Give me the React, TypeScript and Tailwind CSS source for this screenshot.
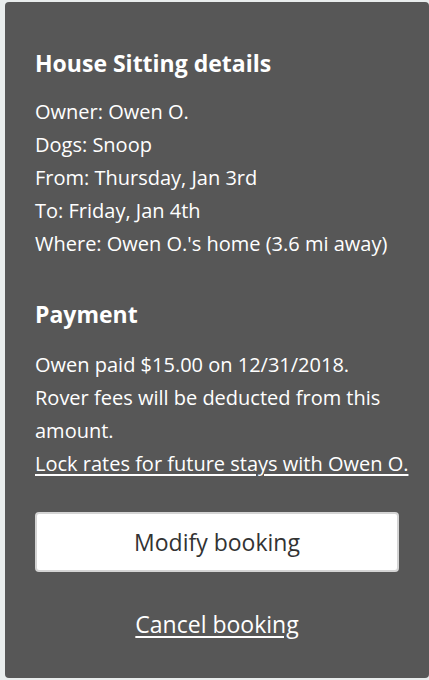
import React from 'react';

const details = [
  'Owner: Owen O.',
  'Dogs: Snoop',
  'From: Thursday, Jan 3rd',
  'To: Friday, Jan 4th',
  "Where: Owen O.'s home (3.6 mi away)",
];

export default function App() {
  return (
    <div
      className="min-h-[680px] w-[429px] bg-[#e9eded] pt-[2px] pl-[5px]"
      style={{ fontFamily: '"Open Sans", Lato, sans-serif' }}
    >
      <div className="h-[676px] rounded-[4px] bg-[#575757] px-[30px] pt-[47px] text-white">
        <h2 className="text-[23px] font-bold leading-[28px]">House Sitting details</h2>
        <div className="mt-[18px] text-[20px] leading-[33px]">
          {details.map((d) => (
            <p key={d}>{d}</p>
          ))}
        </div>

        <h2 className="mt-[40px] text-[23px] font-bold leading-[28px]">Payment</h2>
        <div className="mt-[20px] text-[20px] leading-[33px]">
          <p>Owen paid $15.00 on 12/31/2018.</p>
          <p>Rover fees will be deducted from this amount.</p>
          <a href="#" className="whitespace-nowrap underline underline-offset-[3px]">
            Lock rates for future stays with Owen O.
          </a>
        </div>

        <button className="mt-[32px] block h-[60px] w-[364px] rounded-[4px] border-2 border-[#d4d4d4] bg-white text-[23px] text-[#333]">
          Modify booking
        </button>

        <div className="mt-[38px] text-center">
          <a href="#" className="text-[23px] leading-[28px] underline underline-offset-[3px]">
            Cancel booking
          </a>
        </div>
      </div>
    </div>
  );
}
